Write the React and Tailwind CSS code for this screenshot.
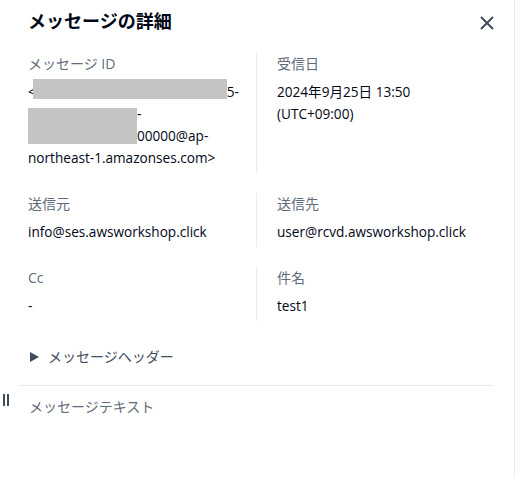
import React from "react";

const font = { fontFamily: '"Open Sans", "Noto Sans CJK JP", sans-serif' };

function Label({ children }) {
  return <div className="text-[14px] leading-[22px] text-[#5f6b7a]">{children}</div>;
}

function Value({ children }) {
  return <div className="mt-[6px] text-[13.6px] leading-[22px] text-[#000716]">{children}</div>;
}

function Row({ left, right }) {
  return (
    <div className="flex pl-[28px]">
      <div className="w-[228px] pb-[4px] pr-5">{left}</div>
      <div className="flex-1 border-l border-[#e9ebed] pb-[4px] pl-5">{right}</div>
    </div>
  );
}

export default function App() {
  return (
    <div className="h-[478px] w-[519px] bg-white" style={font}>
      <div className="relative h-[478px] w-[515px] border-r border-[#e9ebed]">
        {/* header */}
        <div className="flex items-start justify-between pl-[28px] pr-[20px] pt-[10px]">
          <h2 className="text-[18px] font-bold leading-[22px] text-[#000716]">メッセージの詳細</h2>
          <button className="mt-[6px] text-[#414d5c]">
            <svg width="14" height="14" viewBox="0 0 14 14">
              <path d="M1 1 L13 13 M13 1 L1 13" stroke="currentColor" strokeWidth="2" fill="none" />
            </svg>
          </button>
        </div>

        <div className="mt-[21px] flex flex-col gap-[20px]">
          <Row
            left={
              <>
                <Label>メッセージ ID</Label>
                <div className="relative mt-[6px] text-[13.6px] leading-[22px] text-[#000716]">
                  <div className="whitespace-nowrap">
                    &lt;<span className="inline-block w-[191px]" />5-
                  </div>
                  <div className="whitespace-nowrap">
                    <span className="inline-block w-[109px]" />-
                  </div>
                  <div className="whitespace-nowrap">
                    <span className="inline-block w-[109px]" />00000@ap-
                  </div>
                  <div className="whitespace-nowrap">northeast-1.amazonses.com&gt;</div>
                  <div className="absolute left-[5px] top-[-2px] h-[20px] w-[194px] bg-[#c4c4c4]" />
                  <div className="absolute left-0 top-[27px] h-[36px] w-[109px] bg-[#c4c4c4]" />
                </div>
              </>
            }
            right={
              <>
                <Label>受信日</Label>
                <Value>
                  2024年9月25日 13:50
                  <br />
                  (UTC+09:00)
                </Value>
              </>
            }
          />
          <Row
            left={
              <>
                <Label>送信元</Label>
                <Value>info@ses.awsworkshop.click</Value>
              </>
            }
            right={
              <>
                <Label>送信先</Label>
                <Value>user@rcvd.awsworkshop.click</Value>
              </>
            }
          />
          <Row
            left={
              <>
                <Label>Cc</Label>
                <Value>-</Value>
              </>
            }
            right={
              <>
                <Label>件名</Label>
                <Value>test1</Value>
              </>
            }
          />
        </div>

        <div className="mt-[25px] flex items-center gap-[9px] pl-[30px] text-[14px] leading-[22px] text-[#414d5c]">
          <svg width="9" height="10" viewBox="0 0 9 10">
            <path d="M0 0 L9 5 L0 10 Z" fill="#414d5c" />
          </svg>
          <span>メッセージヘッダー</span>
        </div>

        <div className="ml-[18px] mr-[20px] mt-[17px] border-t border-[#e9ebed] pl-[11px] pt-[10px]">
          <div className="text-[14px] leading-[22px] text-[#5f6b7a]">メッセージテキスト</div>
        </div>

        <div className="absolute left-[3px] top-[394px] flex gap-[2px]">
          <div className="h-[12px] w-[2px] bg-[#414d5c]" />
          <div className="h-[12px] w-[2px] bg-[#414d5c]" />
        </div>
      </div>
    </div>
  );
}
